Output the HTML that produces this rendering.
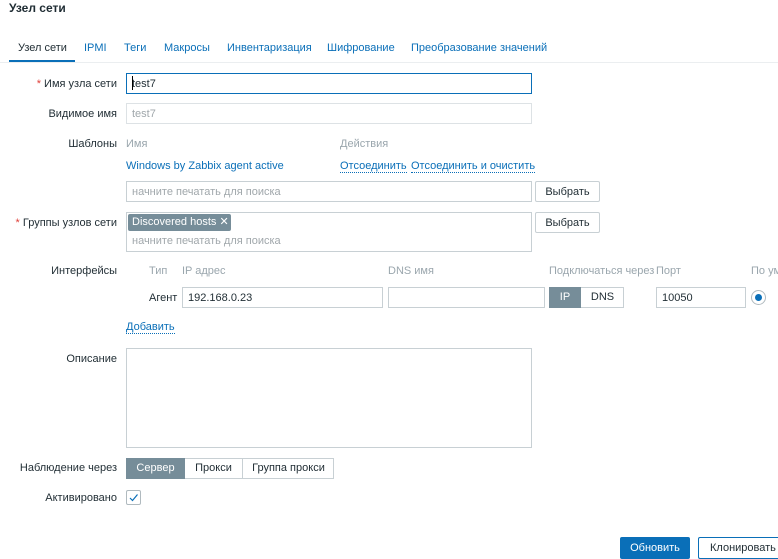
<!DOCTYPE html>
<html><head><meta charset="utf-8"><style>
*{box-sizing:border-box;margin:0;padding:0}
body{width:778px;height:556px;overflow:hidden;background:#fff;font-family:"Liberation Sans","DejaVu Sans",sans-serif;font-size:11px;color:#1f2c33;position:relative}
.a{position:absolute;white-space:nowrap}
.lbl{position:absolute;right:661px;white-space:nowrap}
.inp{position:absolute;border:1px solid #c8d0d4;background:#fff;height:21px;padding:0 5px;line-height:20px}
.btn{position:absolute;border:1px solid #c8d0d4;background:#fff;text-align:center;line-height:20px;height:21px;border-radius:2px}
.lnk{color:#0a6fb8}
.dot{border-bottom:1px dotted #0a6fb8}
.g{color:#9aa6ad}
.ph{color:#a0a7ab}
.r{color:#e0403a}
</style></head><body>
<div class="a" style="left:9px;top:1px;font-size:12px;font-weight:bold;color:#1f2c33">Узел сети</div>
<div class="a" style="left:0;top:62px;width:778px;height:1px;background:#ebeef0"></div>
<div class="a" style="left:9px;top:60px;width:66px;height:2px;background:#0a6fb8"></div>
<div class="a" style="left:18px;top:42px">Узел сети</div>
<div class="a lnk" style="left:84px;top:42px">IPMI</div>
<div class="a lnk" style="left:124px;top:42px">Теги</div>
<div class="a lnk" style="left:164px;top:42px">Макросы</div>
<div class="a lnk" style="left:227px;top:42px">Инвентаризация</div>
<div class="a lnk" style="left:327px;top:42px">Шифрование</div>
<div class="a lnk" style="left:411px;top:42px">Преобразование значений</div>

<div class="lbl" style="top:78px"><span class="r">*</span> Имя узла сети</div>
<div class="inp" style="left:126px;top:73px;width:406px;border-color:#0a6fb8">test7</div>
<div class="a" style="left:132px;top:76px;width:1px;height:14px;background:#000"></div>
<div class="lbl" style="top:108px">Видимое имя</div>
<div class="inp ph" style="left:126px;top:103px;width:406px;border-color:#dde2e5">test7</div>

<div class="lbl" style="top:138px">Шаблоны</div>
<div class="a g" style="left:126px;top:138px">Имя</div>
<div class="a g" style="left:340px;top:138px">Действия</div>
<div class="a lnk" style="left:126px;top:160px">Windows by Zabbix agent active</div>
<div class="a lnk dot" style="left:340px;top:160px">Отсоединить</div>
<div class="a lnk dot" style="left:411px;top:160px">Отсоединить и очистить</div>
<div class="inp ph" style="left:126px;top:181px;width:406px">начните печатать для поиска</div>
<div class="btn" style="left:535px;top:181px;width:65px">Выбрать</div>

<div class="lbl" style="top:217px"><span class="r">*</span> Группы узлов сети</div>
<div class="inp" style="left:126px;top:212px;width:406px;height:40px"></div>
<div class="a" style="left:128px;top:214px;width:103px;height:17px;background:#768d99;color:#fff;border-radius:2px;padding-left:4px;line-height:16px">Discovered hosts <b>✕</b></div>
<div class="a ph" style="left:132px;top:235px">начните печатать для поиска</div>
<div class="btn" style="left:535px;top:212px;width:65px">Выбрать</div>

<div class="lbl" style="top:265px">Интерфейсы</div>
<div class="a g" style="left:149px;top:265px">Тип</div>
<div class="a g" style="left:182px;top:265px">IP адрес</div>
<div class="a g" style="left:388px;top:265px">DNS имя</div>
<div class="a g" style="left:549px;top:265px">Подключаться через</div>
<div class="a g" style="left:656px;top:265px">Порт</div>
<div class="a g" style="left:751px;top:265px;width:27px;overflow:hidden">По умолчанию</div>
<div class="a" style="left:149px;top:292px">Агент</div>
<div class="inp" style="left:182px;top:287px;width:201px">192.168.0.23</div>
<div class="inp" style="left:388px;top:287px;width:157px"></div>
<div class="a" style="left:549px;top:287px;width:75px;height:21px;border:1px solid #c8d0d4;background:#fff"></div>
<div class="a" style="left:549px;top:287px;width:32px;height:21px;background:#768d99;color:#fff;text-align:center;line-height:21px">IP</div>
<div class="a" style="left:581px;top:287px;width:43px;height:21px;text-align:center;line-height:21px">DNS</div>
<div class="inp" style="left:656px;top:287px;width:90px">10050</div>
<div class="a" style="left:751px;top:290px;width:15px;height:15px;border:1px solid #b0babf;border-radius:50%"></div>
<div class="a" style="left:755px;top:294px;width:7px;height:7px;background:#0a6fb8;border-radius:50%"></div>
<div class="a lnk dot" style="left:126px;top:321px">Добавить</div>

<div class="lbl" style="top:353px">Описание</div>
<div class="inp" style="left:126px;top:348px;width:406px;height:100px"></div>

<div class="lbl" style="top:462px">Наблюдение через</div>
<div class="a" style="left:126px;top:458px;width:208px;height:21px;border:1px solid #c8d0d4"></div>
<div class="a" style="left:126px;top:458px;width:59px;height:21px;background:#768d99;color:#fff;text-align:center;line-height:21px">Сервер</div>
<div class="a" style="left:185px;top:458px;width:57px;height:21px;text-align:center;line-height:21px">Прокси</div>
<div class="a" style="left:242px;top:458px;width:1px;height:21px;background:#c8d0d4"></div>
<div class="a" style="left:243px;top:458px;width:91px;height:21px;text-align:center;line-height:21px">Группа прокси</div>

<div class="lbl" style="top:492px">Активировано</div>
<div class="a" style="left:126px;top:490px;width:15px;height:15px;border:1px solid #b0babf;border-radius:2px"></div>
<svg class="a" style="left:128px;top:492px" width="11" height="11"><path d="M2 6 L4.5 8.5 L9.5 2.5" stroke="#0a6fb8" stroke-width="1.2" fill="none"/></svg>

<div class="a" style="left:620px;top:537px;width:70px;height:22px;background:#0a6fb8;color:#fff;text-align:center;line-height:22px;border-radius:2px">Обновить</div>
<div class="a" style="left:698px;top:537px;width:80px;height:22px;border:1px solid #0a6fb8;border-right:none;color:#1f2c33;text-align:left;padding-left:11px;line-height:21px;border-radius:2px 0 0 2px;overflow:hidden">Клонировать</div>
</body></html>
